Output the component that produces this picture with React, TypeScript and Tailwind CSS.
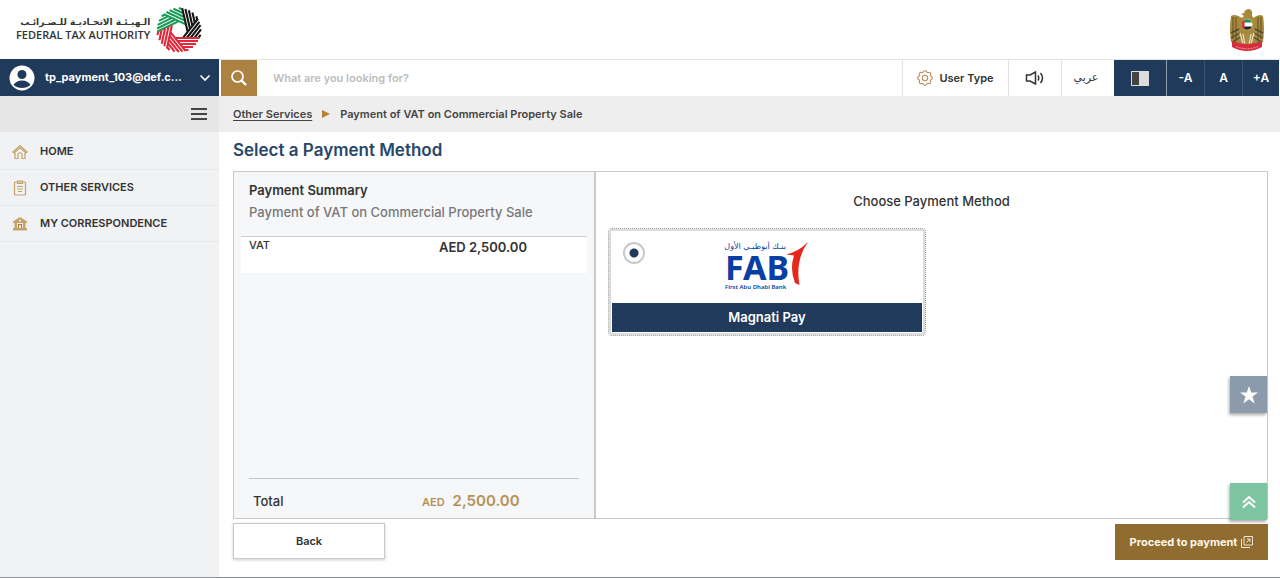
import type { ReactNode } from "react";

const ringGroups = [
  { angle: -26, color: "#169b55" },
  { angle: 25, color: "#169b55" },
  { angle: 77, color: "#151515" },
  { angle: 128, color: "#151515" },
  { angle: 180, color: "#e0283a" },
  { angle: 231, color: "#e0283a" },
  { angle: 282, color: "#e0283a" },
];

function RingLogo() {
  return (
    <svg viewBox="-23 -23 46 46" className="size-[46px] shrink-0" aria-hidden="true">
      {ringGroups.map((g) => (
        <g key={g.angle} transform={`rotate(${g.angle})`} stroke={g.color} strokeWidth="2.1">
          <path d="M-20.500 -8 H3.200 M-19 -11 H.9 M-17 -14 H-1.500 M-14 -17 H-3.900 M-9.500 -20 H-6" />
        </g>
      ))}
    </svg>
  );
}

function Emblem() {
  return (
    <svg viewBox="0 0 36 44" className="h-[44px] w-[36px]" role="img" aria-label="UAE emblem">
      <path d="M15 5 Q16 1 20 1 Q24 2 23 7 L24 10 Q31 5 34 8 Q36 20 34 34 L25 37 L18 40 L11 37 L2 34 Q0 20 2 8 Q6 5 13 10 L15 8 L12 6Z" fill="#a98a3c" />
      <path d="M4 9 V31 M7 9 V34 M29 9 V34 M32 9 V31" stroke="#6d5a2a" strokeWidth="1.2" />
      <path d="M2 25 L10 21 M2 30 L11 25 M3 34 L12 29 M34 25 L26 21 M34 30 L25 25 M33 34 L24 29" stroke="#4e4a38" strokeWidth="1.4" />
      <path d="M11 25 L14 36 M14 26 L16 37 M25 25 L22 36 M22 26 L20 37" stroke="#e6dfc6" strokeWidth="1.3" />
      <circle cx="18" cy="16.500" r="6" fill="#fff" stroke="#a98a3c" />
      <path d="M13 14.500 A5.500 5.500 0 0 1 23 14.500Z" fill="#2d8a55" />
      <path d="M13 18.500 A5.500 5.500 0 0 0 23 18.500Z" fill="#222" />
      <path d="M12.600 14 L15.500 12 V21 L12.600 19Z" fill="#d8323c" />
      <path d="M3 33 Q18 39 33 33 L33 39 Q18 47 3 39Z" fill="#d42f3b" />
      <path d="M7 38.500 Q18 43 29 38.500" stroke="#ee9aa0" strokeWidth="1" fill="none" strokeDasharray="2 1" />
    </svg>
  );
}

function HomeIcon() {
  return (
    <svg viewBox="0 0 16 16" className="size-4" fill="none" stroke="#c4a26a" strokeWidth="1.2" aria-hidden="true">
      <path d="M1 8 L8 1.500 L15 8 L14 9 L8 3.700 L2 9Z M3 9 V14.500 H6 V10 Q8 7.500 10 10 V14.500 H13 V9" />
    </svg>
  );
}

function ClipboardIcon() {
  return (
    <svg viewBox="0 0 16 16" className="size-4" fill="none" stroke="#c4a26a" strokeWidth="1.2" aria-hidden="true">
      <rect x="2.500" y="2" width="11" height="13" rx="1" />
      <path d="M5.500 1 H10.500 V3.500 H5.500Z M5 6.500 H11 M5 9 H11 M6 11.500 H10" />
    </svg>
  );
}

function BuildingIcon() {
  return (
    <svg viewBox="0 0 16 16" className="size-4" aria-hidden="true">
      <path d="M8 1 L15 5.500 V7 H1 V5.500Z M2.500 7 H5 V12 H2.500Z M11 7 H13.500 V12 H11Z M1 12 H15 V14.500 H1Z" fill="#c4a26a" />
      <path d="M6.500 12 V8.500 H9.500 V12" fill="none" stroke="#a8803c" strokeWidth="1.2" />
      <circle cx="8" cy="4.500" r="1" fill="#f1f2f4" />
    </svg>
  );
}

function GearIcon() {
  const d = Array.from({ length: 64 }, (_, i) => {
    const a = (i / 64) * Math.PI * 2;
    const r = 6.7 + 0.6 * Math.max(-1, Math.min(1, 2 * Math.cos(a * 8)));
    return `${i ? "L" : "M"}${(8 + r * Math.cos(a)).toFixed(2)} ${(8 + r * Math.sin(a)).toFixed(2)}`;
  }).join(" ");
  return (
    <svg viewBox="0 0 16 16" className="size-4" fill="none" stroke="#c08f5c" strokeWidth="1.1" aria-hidden="true">
      <path d={`${d}Z`} />
      <circle cx="8" cy="8" r="2.700" />
    </svg>
  );
}

function FabLogo() {
  return (
    <span className="flex w-[84px] items-center text-[#0a3ea2]">
      <span className="flex w-[61px] shrink-0 flex-col">
        <span dir="rtl" className="text-right font-['DejaVu_Sans',sans-serif] text-[8px] leading-[9px] whitespace-nowrap">بنـك أبوظبـي الأول</span>
        <span className="font-['Noto_Sans',sans-serif] text-[34px] leading-8 font-bold">FAB</span>
        <span className="font-['Noto_Sans',sans-serif] text-[6px] leading-[8px] font-semibold whitespace-nowrap">First Abu Dhabi Bank</span>
      </span>
      <svg viewBox="0 0 24 44" className="-mt-[6px] h-[44px] w-6 shrink-0" aria-hidden="true">
        <path d="M22 0 Q9 18 13.500 43 L9 41 Q3.500 27 8 13.500 L0 12.500 Q12 10 22 0Z" fill="#e5281e" />
      </svg>
    </span>
  );
}

function NavItem({ icon, children }: { icon: ReactNode; children: ReactNode }) {
  return (
    <li>
      <a href="#" className="flex h-9 items-center gap-3 border-b border-[#e6e7e9] px-3 text-[11px] font-semibold text-[#333]">
        {icon}
        {children}
      </a>
    </li>
  );
}

export default function App() {
  return (
    <div className="flex min-h-screen flex-col border-b border-[#8d8d96] bg-white font-['Inter',sans-serif] text-[#333]">
      <header className="flex h-[59px] items-center justify-between pr-[15px] pl-4">
        <div className="flex items-center gap-1.5">
          <div className="flex flex-col items-end pb-1 whitespace-nowrap">
            <span dir="rtl" className="font-['DejaVu_Sans',sans-serif] text-[9px] leading-[14px] font-bold">الـهيـئـة الاتحـاديـة للـضـرائـب</span>
            <span className="font-['Open_Sans',sans-serif] text-[11px] leading-3 font-semibold">FEDERAL TAX AUTHORITY</span>
          </div>
          <RingLogo />
        </div>
        <Emblem />
      </header>

      <div className="flex flex-1">
        <aside className="flex w-[219px] shrink-0 flex-col bg-[#f1f2f4]">
          <button className="flex h-[37px] items-center bg-[#1f3a5a] px-2 text-[11px] font-bold text-white">
            <svg viewBox="0 0 28 28" className="mr-[9px] size-7 shrink-0" aria-hidden="true">
              <circle cx="14" cy="14" r="12.500" fill="#fff" />
              <circle cx="14" cy="10.500" r="4.500" fill="#1f3a5a" />
              <path d="M5.500 21 Q8 16.500 14 16.500 Q20 16.500 22.500 21 Q19 24 14 24 Q9 24 5.500 21Z" fill="#1f3a5a" />
            </svg>
            <span className="flex-1 text-left">tp_payment_103@def.c...</span>
            <svg viewBox="0 0 12 8" className="h-2 w-3" fill="none" stroke="#fff" strokeWidth="1.6" aria-hidden="true">
              <path d="M1.500 1.500 L6 6 L10.500 1.500" />
            </svg>
          </button>
          <div className="flex h-9 items-center justify-end bg-[#e6e6e7] pr-3">
            <button aria-label="Toggle menu">
              <svg viewBox="0 0 16 12" className="h-3 w-4" stroke="#444" strokeWidth="1.800" aria-hidden="true">
                <path d="M0 1 H16 M0 6 H16 M0 11 H16" />
              </svg>
            </button>
          </div>
          <nav className="pt-0.5">
            <ul>
              <NavItem icon={<HomeIcon />}>HOME</NavItem>
              <NavItem icon={<ClipboardIcon />}>OTHER SERVICES</NavItem>
              <NavItem icon={<BuildingIcon />}>MY CORRESPONDENCE</NavItem>
            </ul>
          </nav>
        </aside>

        <main className="flex min-w-0 flex-1 flex-col">
          <div className="flex h-[37px] border-t border-[#e4e4e4] pr-px text-xs">
            <button aria-label="Search" className="ml-0.5 flex w-9 shrink-0 items-center justify-center bg-[#ad8140]">
              <svg viewBox="0 0 18 18" className="size-[18px]" fill="none" stroke="#fff" aria-hidden="true">
                <circle cx="7.500" cy="7.500" r="5.500" strokeWidth="1.700" />
                <path d="M11.500 11.500 L16 16" strokeWidth="2.400" />
              </svg>
            </button>
            <input type="search" aria-label="Search services" placeholder="What are you looking for?" className="min-w-0 flex-1 px-4 text-[11px] font-semibold outline-none placeholder:text-[#bdbdbd]" />
            <button className="flex w-[106px] items-center justify-center gap-1.5 border-l border-[#e2e2e2] text-[11px] font-semibold">
              <GearIcon />
              User Type
            </button>
            <button aria-label="Read aloud" className="flex w-[53px] items-center justify-center border-l border-[#e2e2e2]">
              <svg viewBox="0 0 20 16" className="h-4 w-5" fill="none" stroke="#333" strokeWidth="1.500" aria-hidden="true">
                <path d="M1.500 5 H5 L10.500 2 V14 L5 11 H1.500Z M13 5.500 Q14.500 8 13 10.500 M15.500 3 Q19.500 8 15.500 13" />
              </svg>
            </button>
            <button className="w-[53px] border-l border-[#e2e2e2] pr-1 font-['DejaVu_Sans',sans-serif] text-[11px]">عربي</button>
            <div className="flex bg-[#1f3a5a] text-xs font-semibold text-white">
              <button aria-label="Contrast" className="flex w-[53px] items-center justify-center border-r border-[#8ea0b2]">
                <span className="flex h-[15px] w-[18px] border border-[#ddd] bg-[#444]">
                  <span className="ml-auto w-[9px] bg-[#ddd]" />
                </span>
              </button>
              <button className="w-[38px] border-r border-[#3a5370]">-A</button>
              <button className="w-[38px] border-r border-[#3a5370]">A</button>
              <button className="w-9">+A</button>
            </div>
          </div>

          <nav aria-label="Breadcrumb" className="flex h-9 items-center gap-2.5 bg-[#eee] px-3.5 text-[11px] font-semibold text-[#444]">
            <a href="#" className="underline underline-offset-2">Other Services</a>
            <svg viewBox="0 0 8 8" className="size-2" fill="#b97f35" aria-hidden="true"><path d="M0 0 L8 4 L0 8Z" /></svg>
            <span>Payment of VAT on Commercial Property Sale</span>
          </nav>

          <div className="flex flex-1 flex-col pr-3 pl-3.5">
            <h1 className="flex h-[39px] items-center pb-0.5 text-[17px] font-semibold text-[#274868]">Select a Payment Method</h1>

            <div className="flex min-h-[348px] border border-[#c9c9c9]">
              <section className="flex w-[362px] shrink-0 flex-col border-r-2 border-[#c9cacc] bg-[#f6f7f9] px-[7px]">
                <div className="px-2 pt-1.5">
                  <h2 className="text-[13px] leading-6 font-semibold">Payment Summary</h2>
                  <p className="text-[13px] leading-5 font-medium text-[#777]">Payment of VAT on Commercial Property Sale</p>
                </div>
                <dl className="mt-3.5 flex h-[37px] border-t border-[#ccc] bg-white px-2">
                  <dt className="w-[190px] text-[11px] leading-4 font-medium">VAT</dt>
                  <dd className="text-[13px] leading-5 font-semibold">AED 2,500.00</dd>
                </dl>
                <dl className="mx-2 mt-auto flex h-10 items-center border-t border-[#c4c4c4] px-1 pt-1.5">
                  <dt className="w-[169px] text-[13px] font-medium">Total</dt>
                  <dd className="flex items-baseline gap-2 font-semibold text-[#b49258]">
                    <span className="text-[11px]">AED</span>
                    <span className="text-[15px]">2,500.00</span>
                  </dd>
                </dl>
              </section>

              <section className="relative flex min-w-0 flex-1 flex-col px-3">
                <h2 className="pt-5 pb-[18px] text-center text-[13px] leading-[18px] font-medium">Choose Payment Method</h2>
                <label className="flex w-[318px] max-w-full flex-col rounded border border-dotted border-[#999] p-[3px] shadow-[inset_0_0_0_2px_#dcdcdc]">
                  <span className="flex h-[71px] items-start px-[11px] pt-2.5">
                    <input type="radio" name="method" defaultChecked className="size-[22px] shrink-0 appearance-none rounded-full border-2 border-[#c9c9c9] bg-[radial-gradient(circle,#1f3a5a_4px,white_5px)]" />
                    <span className="ml-20"><FabLogo /></span>
                  </span>
                  <span className="bg-[#1f3a5a] text-center text-[13px] leading-[29px] font-semibold text-white">Magnati Pay</span>
                </label>
                <button aria-label="Favourites" className="absolute top-[204px] right-0 flex size-[37px] items-center justify-center bg-[#8b9bab] shadow-[-1px_2px_3px_#0005]">
                  <svg viewBox="0 0 20 20" className="size-5" fill="#fff" aria-hidden="true">
                    <path d="M10 1 L12.200 7.600 H19 L13.500 11.600 L15.600 18.500 L10 14.300 L4.400 18.500 L6.500 11.600 L1 7.600 H7.800Z" />
                  </svg>
                </button>
                <button aria-label="Back to top" className="absolute top-[311px] right-0 flex size-[37px] items-center justify-center bg-[#7dc5a1] shadow-[-1px_2px_3px_#0005]">
                  <svg viewBox="0 0 16 16" className="size-4" fill="none" stroke="#fff" strokeWidth="2" aria-hidden="true">
                    <path d="M2 8.500 L8 3 L14 8.500 M2 13.500 L8 8 L14 13.500" />
                  </svg>
                </button>
              </section>
            </div>

            <div className="flex items-start justify-between pt-1 pb-4 text-[11px] font-semibold">
              <button className="h-9 w-[152px] border border-[#c9c9c9] bg-white shadow-[0_1px_3px_#0003]">Back</button>
              <button className="mt-px flex h-9 w-[153px] items-center justify-center gap-1 bg-[#916c31] font-bold text-[#fdf6ea]">
                Proceed to payment
                <svg viewBox="0 0 12 12" className="size-3" fill="none" stroke="#f3e6d0" strokeWidth="1" aria-hidden="true">
                  <path d="M3 .5 H11.500 V9 H3Z M.5 3 V11.500 H9 M5.500 6.500 L9 3 M6 3 H9 V6" />
                </svg>
              </button>
            </div>
          </div>
        </main>
      </div>
    </div>
  );
}
